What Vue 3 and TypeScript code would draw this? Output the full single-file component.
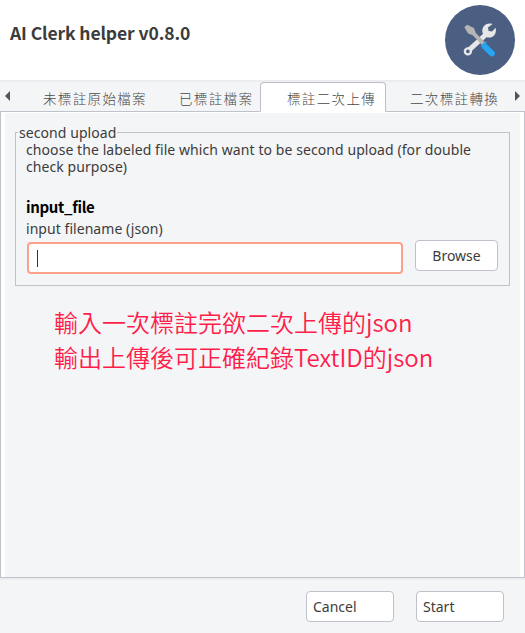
<script setup lang="ts">
import { ref } from 'vue'

const tabs: string[] = ['未標註原始檔案', '已標註檔案', '標註二次上傳', '二次標註轉換']
const active = ref<number>(2)
const filename = ref<string>('')
</script>

<template>
  <main class="window">
    <header class="header">
      <h1>AI Clerk helper v0.8.0</h1>
      <svg class="logo" viewBox="0 0 70 70" aria-hidden="true">
        <circle cx="35" cy="35" r="35" fill="#4b5f83" />
        <path d="M24.5 44.7 41 29.5" stroke="#e7e7e7" stroke-width="5" />
        <circle cx="22.9" cy="46.4" r="3" fill="none" stroke="#e7e7e7" stroke-width="2.4" />
        <path d="M47.5 19c-5.800-1.700-10.500 2.100-10.200 7.300.2 3.900 3.300 6.400 7 6.300 4.600-.1 7.700-4.500 6.300-9.900l-3.600 3.900-3.400-.5-.6-3.500z" fill="#e7e7e7" />
        <path d="m19.300 22.300 2.800-2.500 6.900 3.200 1.700 4.700L40.500 38l-2.900 2.700-9.900-10.500-4.600-1.700z" fill="#b5b5b5" />
        <path d="m39.700 41.300 7.200 7.100" stroke="#27a4f2" stroke-width="6" stroke-linecap="round" />
        <path d="m36.600 41.200 4.600-4.300" stroke="#27a4f2" stroke-width="2" />
      </svg>
    </header>

    <nav class="tabs">
      <svg class="arrow left" viewBox="0 0 5 10"><path d="M5 0v10L0 5z" /></svg>
      <button
        v-for="(tab, i) in tabs"
        :key="tab"
        class="tab"
        :class="['tab-' + i, { active: active === i }]"
        @click="active = i"
      >{{ tab }}</button>
      <svg class="arrow right" viewBox="0 0 5 10"><path d="M0 0v10l5-5z" /></svg>
    </nav>

    <section class="panel">
      <div class="content">
        <fieldset class="group">
          <legend>second upload</legend>
          <p class="description">choose the labeled file which want to be second upload (for double<br />check purpose)</p>
          <h2>input_file</h2>
          <label for="file">input filename (json)</label>
          <div class="picker">
            <div class="field"><i class="caret"></i><input id="file" v-model="filename" type="text" /></div>
            <button class="button browse">Browse</button>
          </div>
        </fieldset>
        <p class="note">
          <span class="note-line">輸入一次標註完欲二次上傳的json</span>
          <span class="note-line">輸出上傳後可正確紀錄TextID的json</span>
        </p>
      </div>
    </section>

    <footer class="footer">
      <button class="button cancel">Cancel</button>
      <button class="button start">Start</button>
    </footer>
  </main>
</template>

<style>
body { background: #f4f5f7; overflow: hidden; }
</style>

<style scoped>
* { box-sizing: border-box; }
h1, h2, p { margin: 0; }
button { margin: 0; cursor: default; }
.window {
  width: 525px;
  height: 633px;
  display: flex;
  flex-direction: column;
  background: #f4f5f7;
  color: #3c3c3c;
  font: 14px/17px "Noto Sans", "Noto Sans CJK TC", sans-serif;
}
.header {
  height: 80px;
  display: flex;
  justify-content: space-between;
  padding: 5px 10px 0;
  background: #fff;
}
h1 {
  margin-top: 15px;
  font: 700 17.5px/26px "Noto Sans CJK TC", sans-serif;
  letter-spacing: -0.11px;
  white-space: nowrap;
}
.logo { width: 70px; height: 70px; }
.tabs {
  height: 32px;
  display: flex;
  border-top: 2px solid #ededf0;
  border-bottom: 1px solid #bfc2ca;
}
.arrow { width: 5px; height: 10px; flex: none; margin-top: 9px; fill: #555; }
.left { margin-left: 5px; }
.tab {
  height: 30px;
  padding: 3px 0 1px;
  border: 1px solid transparent;
  background: none;
  color: #484848;
  font: 300 13.5px/22px "AR PL UKai TW", "Noto Sans CJK TC", serif;
  letter-spacing: 1.35px;
  text-align: left;
  white-space: nowrap;
  flex: none;
}
.tab-0 { width: 137px; padding-left: 32px; }
.tab-1 { width: 113px; padding-left: 31px; }
.tab-2 { width: 126px; padding-left: 26px; }
.tab-3 { width: 129px; padding-left: 23px; }
.active { background: #fff; border-color: #bcbfc6; border-bottom-color: #fff; border-radius: 4px 4px 0 0; }
.panel {
  height: 466px;
  padding: 1px 4px;
  border: solid #bfc2ca;
  border-width: 0 1px 1px;
  background: #fff;
}
.content { height: 464px; padding: 11px 10px 0; background: #f4f5f7; }
.group {
  width: 495px;
  height: 162px;
  margin: 0;
  padding: 0 10px;
  border: 1px solid #bfc2ca;
}
legend { height: 17px; margin-left: -8px; padding: 0 1px; letter-spacing: 0.07px; }
.description { letter-spacing: 0.08px; white-space: nowrap; }
h2 {
  margin-top: 21px;
  color: #000;
  font: 700 15px/22px "Noto Sans CJK TC", sans-serif;
  letter-spacing: -0.33px;
}
label { display: block; margin-top: 2px; line-height: 18px; letter-spacing: 0.05px; }
.picker { display: flex; align-items: flex-start; gap: 12px; margin-top: 2px; }
.field {
  width: 376px;
  height: 32px;
  display: flex;
  align-items: center;
  margin: 2px 0 0 1px;
  padding-left: 8px;
  border: 2px solid #fba18b;
  border-radius: 4px;
  background: #fff;
}
.caret { width: 1px; height: 17px; background: #333; }
.field input { width: 340px; height: 22px; border: 0; outline: 0; background: none; font: inherit; }
.button {
  height: 31px;
  padding: 0;
  border: 1px solid #bfc2ca;
  border-radius: 4px;
  background: #fff;
  color: #3c3c3c;
  font: inherit;
}
.browse { width: 83px; }
.note { margin: 18px 0 0 39px; color: #ff1d4a; font: 350 24px/35px "Noto Sans CJK TC", sans-serif; }
.note-line { display: block; white-space: nowrap; }
.footer {
  height: 55px;
  display: flex;
  gap: 22px;
  padding: 11px 0 0 306px;
  border-top: 2px solid #ededf0;
}
.cancel, .start { width: 88px; padding-left: 6px; text-align: left; }
</style>
